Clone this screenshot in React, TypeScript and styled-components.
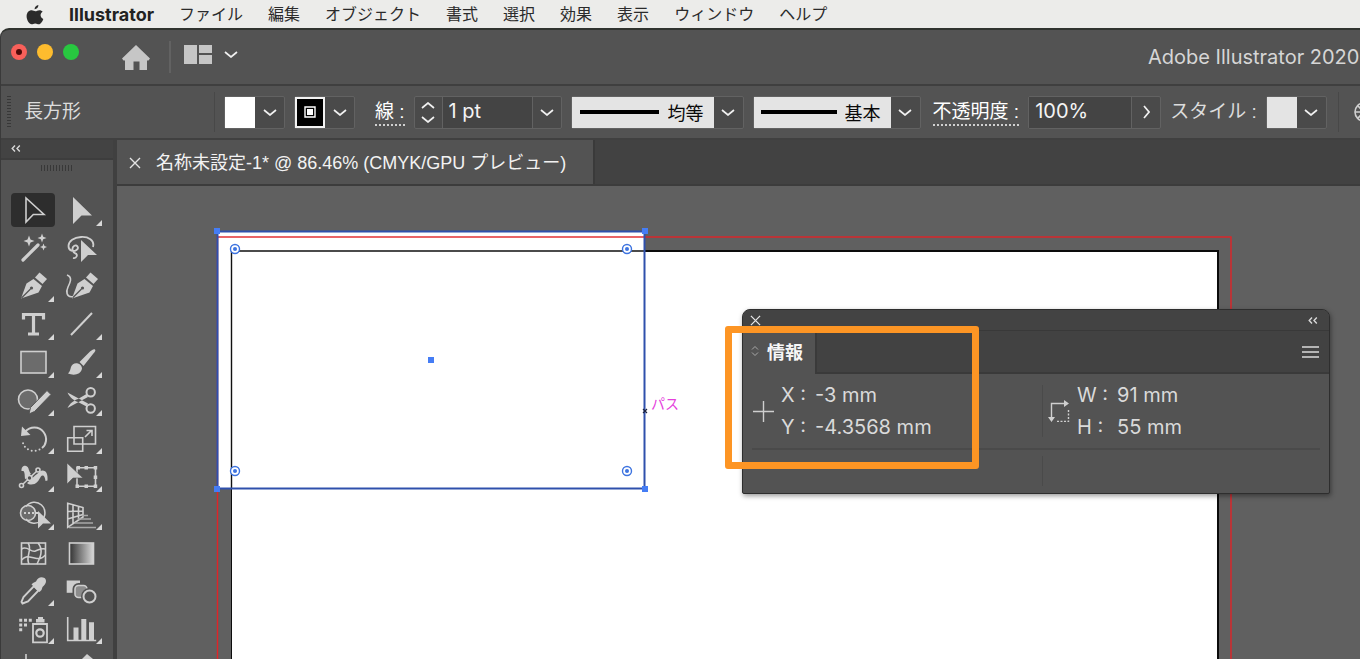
import React from "react";
import styled, { createGlobalStyle } from "styled-components";

const ui = `"Liberation Sans", "Noto Sans CJK JP", sans-serif`;
const wide = `Inter, "Noto Sans CJK JP", sans-serif`;

const GlobalStyle = createGlobalStyle`
  * { box-sizing: border-box; }
  body { margin: 0; background: #ececea; font-family: ${ui}; color: #e8e8e8; }
  button, input, select { font: inherit; color: inherit; margin: 0; padding: 0; border: 0; border-radius: 0; background: none; }
  svg { display: block; flex: none; }
`;

const Screen = styled.div`
  display: flex;
  flex-direction: column;
  height: 100vh;
  overflow: hidden;
`;

/* macOS menu bar */
const MenuBar = styled.nav`
  display: flex;
  align-items: center;
  flex: none;
  gap: 25px;
  height: 28px;
  padding: 1px 0 0 26px;
  background: #ececea;
  color: #2b2b2b;
  font-size: 16px;
  line-height: 24px;
`;
const MenuItem = styled.button<{ $app?: boolean }>`
  flex: none;
  white-space: nowrap;
  font-family: ${(p) => (p.$app ? wide : ui)};
  font-size: ${(p) => (p.$app ? 18 : 16)}px;
  font-weight: ${(p) => (p.$app ? 700 : 400)};
  color: ${(p) => (p.$app ? "#222" : "#2b2b2b")};
`;

/* Application window */
const AppWindow = styled.div`
  display: flex;
  flex-direction: column;
  flex: 1;
  min-height: 0;
  overflow: hidden;
  background: #535353;
  border-top: 2px solid #30332f;
  border-left: 1px solid #3a3a3a;
  border-top-left-radius: 9px;
`;
const TitleBar = styled.header`
  display: flex;
  align-items: center;
  flex: none;
  height: 56px;
  padding-left: 10px;
  border-bottom: 2px solid #3f3f3f;
`;
const Lights = styled.div`
  display: flex;
  gap: 10px;
  padding-bottom: 10px;
`;
const Light = styled.button<{ $color: string }>`
  display: grid;
  place-items: center;
  width: 16px;
  height: 16px;
  border-radius: 50%;
  background: ${(p) => p.$color};
`;
const LightDot = styled.span`
  width: 6px;
  height: 6px;
  border-radius: 50%;
  background: #4d0a08;
`;
const IconButton = styled.button`
  display: grid;
  place-items: center;
  flex: none;
`;
const TitleIcons = styled.div`
  display: flex;
  align-items: center;
  gap: 13px;
  margin-left: 43px;
`;
const WorkspaceSwitch = styled.div`
  display: flex;
  align-items: center;
  gap: 12px;
  padding-bottom: 5px;
`;
const TitleRule = styled.span`
  width: 2px;
  height: 32px;
  margin-left: 6px;
  background: #626262;
`;
const AppTitle = styled.h1`
  flex: none;
  width: 212px;
  margin: 0 0 0 auto;
  overflow: hidden;
  white-space: nowrap;
  font-family: ${wide};
  font-size: 20px;
  font-weight: 400;
  line-height: 28px;
  color: #d6d6d6;
`;

/* Control bar */
const ControlBar = styled.div`
  display: flex;
  align-items: center;
  flex: none;
  height: 54px;
  padding-left: 6px;
  border-bottom: 2px solid #404040;
  overflow: hidden;
`;
const Grip = styled.span<{ $horizontal?: boolean }>`
  flex: none;
  width: ${(p) => (p.$horizontal ? "32px" : "4px")};
  height: ${(p) => (p.$horizontal ? "6px" : "32px")};
  background: repeating-linear-gradient(
    ${(p) => (p.$horizontal ? "to right" : "to bottom")},
    #383838 0 1px,
    #535353 1px 3px
  );
`;
const ObjectName = styled.span`
  flex: none;
  width: 190px;
  margin-left: 13px;
  font-size: 19px;
  line-height: 28px;
  color: #dcdcdc;
`;
const BarRule = styled.span<{ $gap?: number }>`
  flex: none;
  width: 1px;
  height: 40px;
  margin-left: ${(p) => p.$gap ?? 0}px;
  background: #484848;
`;
const RecolorButton = styled(IconButton)`
  margin-left: 15px;
`;
const Field = styled.div`
  display: flex;
  flex: none;
  height: 33px;
  margin-left: 9px;
  border: 1px solid #626262;
  border-radius: 2px;
  background: #4a4a4a;
`;
const Swatch = styled.button<{ $fill: string; $framed?: boolean }>`
  display: grid;
  place-items: center;
  width: 30px;
  height: 31px;
  background: ${(p) => p.$fill};
  border: ${(p) => (p.$framed ? "2px solid #f2f2f2" : "0")};
`;
const Drop = styled.button<{ $divided?: boolean }>`
  display: grid;
  place-items: center;
  width: 29px;
  height: 31px;
  border-left: ${(p) => (p.$divided ? "1px solid #626262" : "0")};
`;
const FieldLabel = styled.label<{ $dotted?: boolean; $gap: number }>`
  flex: none;
  margin-left: ${(p) => p.$gap}px;
  padding-top: 2px;
  font-size: 19px;
  line-height: 24px;
  white-space: pre;
  color: ${(p) => (p.$dotted ? "#fff" : "#dcdcdc")};
  border-bottom: ${(p) => (p.$dotted ? "2px dotted #d0d0d0" : "2px solid transparent")};
`;
const Stepper = styled.div`
  display: grid;
  align-content: center;
  gap: 7px;
  width: 28px;
  border-right: 1px solid #626262;
`;
const ValueInput = styled.input<{ $width: number }>`
  width: ${(p) => p.$width}px;
  padding: 0 0 3px 6px;
  background: #444;
  color: #f4f4f4;
  font-family: ${wide};
  font-size: 20px;
  outline: 0;
`;
const StrokePreview = styled.span<{ $width: number }>`
  display: grid;
  place-items: center;
  width: ${(p) => p.$width}px;
  background: #e4e4e4;
`;
const StrokeSelect = styled.select<{ $width: number }>`
  appearance: none;
  width: ${(p) => p.$width}px;
  padding-top: 3px;
  background: #e4e4e4;
  color: #0a0a0a;
  font-size: 18px;
  outline: 0;
`;

/* Work area */
const WorkArea = styled.div`
  display: flex;
  flex: 1;
  min-height: 0;
`;
const ToolsPanel = styled.aside`
  flex: none;
  width: 116px;
  overflow: hidden;
  border-right: 4px solid #404040;
`;
const ToolsHead = styled.div`
  height: 20px;
  padding: 4px 0 0 10px;
  background: #434343;
  border-bottom: 2px solid #3d3d3d;
`;
const GripRow = styled.div`
  display: flex;
  justify-content: center;
  height: 33px;
  padding-top: 5px;
`;
const ToolGrid = styled.div`
  display: grid;
  grid-template-columns: 44px 44px;
  gap: 4px;
  padding-left: 10px;
`;
const ToolButton = styled.button<{ $selected?: boolean }>`
  width: 44px;
  height: 34px;
  border-radius: 4px;
  background: ${(p) => (p.$selected ? "#2d2d2d" : "none")};
  color: #cfcfcf;
`;
const DocumentArea = styled.main`
  display: flex;
  flex-direction: column;
  flex: 1;
  min-width: 0;
`;
const TabStrip = styled.div`
  display: flex;
  flex: none;
  height: 46px;
  background: #424242;
  border-bottom: 2px solid #3c3c3c;
`;
const DocTab = styled.div`
  display: flex;
  align-items: center;
  gap: 15px;
  width: 478px;
  padding: 2px 0 0 12px;
  background: #535353;
  border-right: 2px solid #3a3a3a;
  font-size: 18px;
  line-height: 26px;
  white-space: nowrap;
  color: #f2f2f2;
`;
const Canvas = styled.section`
  position: relative;
  flex: 1;
  min-height: 0;
  overflow: hidden;
  background: #606060;
`;
const Artwork = styled.svg`
  width: 100%;
  height: 100%;
`;

/* Floating info panel */
const InfoPanel = styled.section`
  position: absolute;
  left: 625px;
  top: 123px;
  width: 588px;
  background: #535353;
  border: 1px solid #2e2e2e;
  border-radius: 8px 8px 2px 2px;
  box-shadow: 1px 2px 5px rgba(0, 0, 0, 0.4);
  overflow: hidden;
`;
const PanelHead = styled.div`
  display: flex;
  align-items: center;
  justify-content: space-between;
  height: 21px;
  padding: 0 11px 0 7px;
  background: #434343;
  border-bottom: 1px solid #393939;
`;
const PanelTabs = styled.div`
  display: flex;
  justify-content: space-between;
  height: 43px;
  background: linear-gradient(#424242 41px, #3a3a3a 41px);
`;
const PanelTab = styled.button`
  display: flex;
  align-items: center;
  gap: 8px;
  width: 74px;
  padding: 0 0 4px 8px;
  background: #535353;
  border-right: 2px solid #3a3a3a;
  font-size: 18px;
  font-weight: 700;
  white-space: nowrap;
  color: #f6f6f6;
`;
const PanelMenu = styled(IconButton)`
  padding: 0 10px 2px 0;
`;
const InfoGrid = styled.div`
  display: grid;
  grid-template-columns: 290px 1fr;
  margin: 0 9px;
`;
const InfoCell = styled.div<{ $short?: boolean; $second?: boolean }>`
  display: flex;
  align-items: center;
  gap: 7px;
  height: ${(p) => (p.$short ? 43 : 76)}px;
  border-bottom: ${(p) => (p.$short ? "0" : "2px solid #4a4a4a")};
  background: ${(p) =>
    p.$second
      ? "linear-gradient(#4a4a4a, #4a4a4a) 0 50% / 1px 70% no-repeat"
      : "none"};
  padding-left: ${(p) => (p.$second ? 6 : 1)}px;
`;
const Readings = styled.dl`
  display: grid;
  grid-template-columns: auto 1fr;
  column-gap: 9px;
  margin: 0;
  font-family: ${wide};
  font-size: 20px;
  font-weight: 400;
  line-height: 32px;
  color: #dadada;
  white-space: pre;
`;
const Term = styled.dt``;
const Value = styled.dd`
  margin: 0;
`;
const Highlight = styled.div`
  position: absolute;
  left: 608px;
  top: 140px;
  width: 254px;
  height: 143px;
  border: 7px solid #fd9524;
  border-radius: 3px;
`;

const Chevron = ({ dir = "down", color = "#f0f0f0" }: { dir?: "down" | "up" | "right"; color?: string }) => {
  const d = { down: "M1 1l6 5 6-5", up: "M1 6l6-5 6 5", right: "M1 1l5 6-5 6" }[dir];
  const side = dir === "right";
  return (
    <svg width={side ? 7 : 14} height={side ? 14 : 7} fill="none" stroke={color} strokeWidth="1.7">
      <path d={d} />
    </svg>
  );
};
const Collapse = () => (
  <svg width="10" height="9" fill="none" stroke="#d8d8d8" strokeWidth="1.4">
    <path d="M4 1.5L1.2 4.5L4 7.5M8.8 1.5L6 4.5L8.8 7.5" />
  </svg>
);
const Cross = ({ size }: { size: number }) => (
  <svg width={size} height={size} viewBox="0 0 12 12" fill="none" stroke="#e4e4e4" strokeWidth="1.4">
    <path d="M1 1l10 10M11 1L1 11" />
  </svg>
);

type Tool = { name: string; flyout?: boolean; art: React.ReactNode };
const line = { fill: "none", stroke: "currentColor", strokeWidth: 1.6 };

const Nib = () => (
  <>
    <path d="M24 8.500L28.500 3.500 36 10l-4.500 5z" fill="currentColor" />
    <path d="M22.500 10L31 17l-3.500 6.500L10 29.500 15.500 14.500z" fill="currentColor" />
    <path d="M10.500 29l9-9" stroke="#535353" strokeWidth="1.200" />
    <circle cx="20.500" cy="19" r="1.600" fill="#535353" />
  </>
);

const tools: Tool[] = [
  { name: "選択", art: <path d="M15 5v24l7.300-7.500H33z" {...line} /> },
  { name: "ダイレクト選択", flyout: true, art: <path d="M14 4v27l8.500-8.500H33z" fill="currentColor" /> },
  {
    name: "自動選択",
    art: (
      <>
        <path d="M12 29l15-15" stroke="currentColor" strokeWidth="3.200" strokeLinecap="round" />
        <path
          d="M18 4.500l1.500 4L23.500 10l-4 1.500-1.500 4-1.500-4-4-1.500 4-1.500zM31 2.500l1.200 3.300L35.500 7l-3.300 1.200L31 11.500l-1.200-3.300L26.500 7l3.300-1.200zM32.500 12.500l1 2.500 2.500 1-2.500 1-1 2.500-1-2.500-2.500-1 2.500-1z"
          fill="currentColor"
        />
      </>
    ),
  },
  {
    name: "なげなわ",
    art: (
      <>
        <path d="M34 16C36 9 29 5.500 22 6S9.500 10 9.500 15s5 6 8 4 .5-6-2.500-4-1 7 1.500 7.500S18 28 14 27" {...line} strokeWidth={1.800} />
        <path d="M22 9v22l7-7h9z" fill="currentColor" />
      </>
    ),
  },
  { name: "ペン", flyout: true, art: <Nib /> },
  {
    name: "曲線",
    art: (
      <>
        <g transform="translate(3 0)">
          <Nib />
        </g>
        <path d="M8 6c6 2 3 8 1 12s-2 11 5 9.500" {...line} />
      </>
    ),
  },
  { name: "文字", flyout: true, art: <path d="M12.500 12.500V7.500h20v5M22.500 7.500V27M17 27h11" {...line} strokeWidth={3.200} /> },
  { name: "直線", flyout: true, art: <path d="M12 28L33 6" {...line} strokeWidth={2} /> },
  { name: "長方形", flyout: true, art: <rect x="10" y="6.500" width="25" height="21.500" {...line} fill="#6c6c6c" /> },
  {
    name: "ブラシ",
    flyout: true,
    art: (
      <path
        d="M36 4.500c-1-1-3 .2-5 2L20.500 17l4 4L34 9c2-2.500 3-3.500 2-4.500zM19 18.500c-3-1-6 .5-7 3.500-.7 2.500-1 4.500-3 6.500 6 2.500 13 1 14-5 0-2-1.500-4.200-4-5z"
        fill="currentColor"
      />
    ),
  },
  {
    name: "Shaper",
    flyout: true,
    art: (
      <>
        <circle cx="17" cy="16.500" r="9.500" {...line} fill="#6c6c6c" />
        <path d="M18 31l1.500-6.500L36 7.500l4 4-16.500 17z" fill="currentColor" stroke="#535353" />
      </>
    ),
  },
  {
    name: "はさみ",
    flyout: true,
    art: (
      <>
        <circle cx="31.700" cy="9.300" r="4.200" {...line} strokeWidth={2} />
        <circle cx="31.700" cy="25.500" r="4.200" {...line} strokeWidth={2} />
        <path d="M8.500 9.500L29 20.500l-1.500 3L19 19c-4-1.500-8-4-10.500-9.500zM8.500 25L29 14l-1.500-3L19 16c-4 1.500-8 4-10.500 9z" fill="currentColor" />
      </>
    ),
  },
  {
    name: "回転",
    flyout: true,
    art: (
      <>
        <path d="M14 11C19 5 28 5 32.500 11s2.500 13-1.500 16" {...line} strokeWidth={2} />
        <path d="M11 5.500L10 15l9.500-1z" fill="currentColor" />
        <path d="M28.500 28.500C22 32 13 29 11.500 20" {...line} strokeWidth={2} strokeDasharray="0 4" strokeLinecap="round" />
      </>
    ),
  },
  {
    name: "拡大・縮小",
    flyout: true,
    art: (
      <>
        <path d="M15 5.500h21.500V23H15zM8.700 16.700h15v13.600h-15z" {...line} />
        <path d="M26 16l6-6M27.500 9.500H33V15" {...line} />
      </>
    ),
  },
  {
    name: "線幅",
    flyout: true,
    art: (
      <>
        <path
          d="M10.500 12C10 6 16 5 17.500 9.500 18.500 13 20 17 24 16c3-.8 4-4.500 7.500-4.500 4 0 5.500 4 5 10l-2 .5c-.5-3.500-1.200-5.500-3-5.500-2.500 0-3 6.500-8 8.500-5 1.500-9-.5-9.500-5-.5-3.500 0-6.500-1.500-8z"
          fill="currentColor"
        />
        <path d="M11 26L27 11" stroke="#535353" strokeWidth="4" />
        <path d="M11 26L27 11" {...line} />
        <circle cx="10.500" cy="26.500" r="2" {...line} fill="#535353" />
        <circle cx="27" cy="11" r="2" {...line} fill="#535353" />
        <circle cx="18.500" cy="19" r="2.500" {...line} fill="#535353" />
      </>
    ),
  },
  {
    name: "自由変形",
    flyout: true,
    art: (
      <>
        <path d="M18 8.700h18.500v18.600H18z" {...line} />
        <path d="M16.500 25.500h3.500v3.500h-3.500zM25.500 25.500h3.500v3.500h-3.500zM34.700 25.500h3.500v3.500h-3.500zM34.700 16.500h3.500V20h-3.500zM34.700 7h3.500v3.500h-3.500zM25.500 7h3.500v3.500h-3.500zM17.500 7H21v3.500h-3.500z" fill="currentColor" />
        <path d="M8 4v21l6-6h10z" fill="currentColor" stroke="#535353" strokeWidth=".6" />
      </>
    ),
  },
  {
    name: "シェイプ形成",
    flyout: true,
    art: (
      <>
        <circle cx="17" cy="16" r="7.500" {...line} fill="#6c6c6c" />
        <path d="M15 9.500a10.500 10.500 0 1 1 0 12.500" {...line} />
        <path d="M13 16h15" {...line} strokeWidth={2} strokeDasharray="2 2" />
        <path d="M27 14v17.500l5-5h8z" fill="currentColor" />
      </>
    ),
  },
  {
    name: "遠近グリッド",
    flyout: true,
    art: (
      <>
        <path d="M8.700 6.300v24L24 20V10.500zM14 8v19M19.500 9v14M8.700 14.500L24 14M8.700 22L24 17.500" {...line} />
        <path d="M23 18.500h6M19 22h13M15.500 26H34M10 30.500h27" {...line} stroke="#a8a8a8" strokeWidth={1.400} />
      </>
    ),
  },
  {
    name: "メッシュ",
    art: (
      <>
        <rect x="10.500" y="8" width="24" height="21" {...line} />
        <path d="M17 8c5 7-3 13 1 21M27 8c6 7 2 15-1 21M10.500 14c6-4 9 4 14 2s6-3 10-2M10.500 25c5-5 8-3 13-2s7 1 11-3" {...line} />
      </>
    ),
  },
  {
    name: "グラデーション",
    art: (
      <>
        <defs>
          <linearGradient id="ramp">
            <stop offset="0" stopColor="#333" />
            <stop offset="1" stopColor="#d8d8d8" />
          </linearGradient>
        </defs>
        <rect x="10.500" y="8" width="24" height="21" {...line} fill="url(#ramp)" />
      </>
    ),
  },
  {
    name: "スポイト",
    flyout: true,
    art: (
      <>
        <path d="M23 13l4.500 4.500L17 28.500l-5.500 2L10.500 29l2-5z" {...line} strokeWidth={1.900} />
        <path d="M22 10l3-1.500c2-4 5-5 8.500-3.500 2.500 2 2 6-2 9L30.500 17l-2 2-8-7.500z" fill="currentColor" />
      </>
    ),
  },
  {
    name: "ブレンド",
    art: (
      <>
        <path d="M7.700 7.500H21v12.300H7.700z" fill="currentColor" />
        <rect x="15.500" y="12" width="13" height="13" rx="4" {...line} stroke="#535353" strokeWidth={4} />
        <rect x="16" y="12.500" width="12" height="12" rx="3.500" {...line} fill="#8c8c8c" />
        <circle cx="30.500" cy="23.500" r="6" {...line} fill="#535353" stroke="#535353" strokeWidth={5} />
        <circle cx="30.500" cy="23.500" r="6" {...line} strokeWidth={2} />
      </>
    ),
  },
  {
    name: "シンボルスプレー",
    flyout: true,
    art: (
      <>
        <path d="M22 13h14v18.300H22z" {...line} strokeWidth={1.800} />
        <path d="M25 10.500V8h2V6h5v2h1.500v3.500H25zM8.200 7.800h3v3h-3zM13 7.800h3v3h-3zM17.800 7.800h3v3h-3zM8.200 12.500h3v3h-3zM13 12.500h3v3h-3zM8.200 17.200h3v3h-3z" fill="currentColor" />
        <circle cx="29" cy="22" r="3.700" {...line} strokeWidth={2.200} />
      </>
    ),
  },
  {
    name: "棒グラフ",
    flyout: true,
    art: (
      <>
        <path d="M8.700 6v23.500h28.500" {...line} />
        <path d="M14.500 16.500h5V29h-5zM22.300 8h5v21h-5zM30 11.300h5V29h-5z" fill="currentColor" />
      </>
    ),
  },
  { name: "アートボード", art: <path d="M15 5v25M10 11h22v19" {...line} /> },
  { name: "スライス", art: <path d="M23 10l5-5 6 5-14 18-8 3z" fill="currentColor" /> },
];

const ToolIcon = ({ tool }: { tool: Tool }) => (
  <svg width="44" height="34" viewBox="0 0 44 34">
    {tool.art}
    {tool.flyout && <path d="M43 27v6h-6z" fill="#d8d8d8" />}
  </svg>
);

const corners = [
  [118, 63],
  [510, 63],
  [118, 285],
  [510, 285],
];
const anchors = [
  [100, 45],
  [528, 45],
  [100, 303],
  [528, 303],
  [314, 174],
];

export default function App() {
  return (
    <Screen>
      <GlobalStyle />
      <MenuBar>
        <MenuItem aria-label="Apple">
          <svg width="18" height="20" viewBox="0 0 18 20" fill="#2b2b2b">
            <path d="M12.400 0c.2 2.300-1.800 4.300-3.800 4.200C8.400 2.200 10.300.2 12.400 0zM16.600 6.700c-3 1.800-2.500 5.900.7 7.200-.8 2.500-2.700 5.300-4.400 5.400-1.500 0-1.900-.9-3.700-.9s-2.300.9-3.600.9C3.300 19.300.6 15 .6 11.300c0-4 2.600-6 5-6 1.600 0 2.700 1 3.800 1 1 0 2.300-1.100 4.200-1.100 1 0 2.300.5 3 1.500z" />
          </svg>
        </MenuItem>
        <MenuItem $app>Illustrator</MenuItem>
        {["ファイル", "編集", "オブジェクト", "書式", "選択", "効果", "表示", "ウィンドウ", "ヘルプ"].map((m) => (
          <MenuItem key={m}>{m}</MenuItem>
        ))}
      </MenuBar>
      <AppWindow>
        <TitleBar>
          <Lights>
            <Light $color="#f9605a" aria-label="閉じる">
              <LightDot />
            </Light>
            <Light $color="#fdbc2e" aria-label="しまう" />
            <Light $color="#28c840" aria-label="拡大" />
          </Lights>
          <TitleIcons>
            <IconButton aria-label="ホーム">
              <svg width="28" height="25" viewBox="0 0 28 25" fill="#c6c6c6">
                <path d="M14 0l14 13.500-1.500 2H25V25h-7.500v-8.500h-6V25H3v-9.500H1.500L0 13.500z" />
              </svg>
            </IconButton>
            <TitleRule />
            <WorkspaceSwitch>
              <IconButton aria-label="ワークスペース">
                <svg width="28" height="19" viewBox="0 0 28 19" fill="#c6c6c6">
                  <path d="M0 0h13v19H0zM15 0h13v8H15zM15 10h13v9H15z" />
                </svg>
              </IconButton>
              <IconButton aria-label="ワークスペースの切り替え">
                <Chevron />
              </IconButton>
            </WorkspaceSwitch>
          </TitleIcons>
          <AppTitle>Adobe Illustrator 2020</AppTitle>
        </TitleBar>
        <ControlBar>
          <Grip />
          <ObjectName>長方形</ObjectName>
          <BarRule />
          <Field>
            <Swatch $fill="#fff" aria-label="塗り" />
            <Drop aria-label="塗りの一覧">
              <Chevron />
            </Drop>
          </Field>
          <Field>
            <Swatch $fill="#000" $framed aria-label="線のカラー">
              <svg width="12" height="12">
                <path d="M1 1h10v10H1z" fill="none" stroke="#fff" strokeWidth="1.400" />
                <path d="M3 3h6v6H3z" fill="#fff" />
              </svg>
            </Swatch>
            <Drop aria-label="線のカラーの一覧">
              <Chevron />
            </Drop>
          </Field>
          <FieldLabel $dotted $gap={20} htmlFor="weight">
            線 :
          </FieldLabel>
          <Field>
            <Stepper>
              <IconButton aria-label="増やす">
                <Chevron dir="up" />
              </IconButton>
              <IconButton aria-label="減らす">
                <Chevron />
              </IconButton>
            </Stepper>
            <ValueInput id="weight" $width={89} defaultValue="1 pt" />
            <Drop $divided aria-label="線幅の一覧">
              <Chevron />
            </Drop>
          </Field>
          <Field>
            <StrokePreview $width={96}>
              <svg width="79" height="4">
                <path d="M0 2h79" stroke="#000" strokeWidth="4" />
              </svg>
            </StrokePreview>
            <StrokeSelect $width={46} aria-label="可変線幅プロファイル">
              <option>均等</option>
            </StrokeSelect>
            <Drop aria-label="プロファイルの一覧">
              <Chevron />
            </Drop>
          </Field>
          <Field>
            <StrokePreview $width={91}>
              <svg width="76" height="4">
                <path d="M0 2h76" stroke="#000" strokeWidth="4" />
              </svg>
            </StrokePreview>
            <StrokeSelect $width={46} aria-label="ブラシ定義">
              <option>基本</option>
            </StrokeSelect>
            <Drop aria-label="ブラシの一覧">
              <Chevron />
            </Drop>
          </Field>
          <FieldLabel $dotted $gap={12} htmlFor="opacity">
            不透明度 :
          </FieldLabel>
          <Field>
            <ValueInput id="opacity" $width={102} defaultValue="100%" />
            <Drop $divided aria-label="不透明度の一覧">
              <Chevron dir="right" />
            </Drop>
          </Field>
          <FieldLabel $gap={9} htmlFor="style">
            スタイル :
          </FieldLabel>
          <Field>
            <Swatch id="style" $fill="#e4e4e4" />
            <Drop aria-label="スタイルの一覧">
              <Chevron />
            </Drop>
          </Field>
          <BarRule $gap={11} />
          <RecolorButton aria-label="オブジェクトを再配色">
            <svg width="20" height="20" fill="none" stroke="#d0d0d0" strokeWidth="1.600">
              <circle cx="10" cy="10" r="9" />
              <path d="M10 1v18M1 10h18M4 4l12 12M16 4L4 16" />
            </svg>
          </RecolorButton>
        </ControlBar>
        <WorkArea>
          <ToolsPanel>
            <ToolsHead>
              <IconButton aria-label="パネルを折りたたむ">
                <Collapse />
              </IconButton>
            </ToolsHead>
            <GripRow>
              <Grip $horizontal />
            </GripRow>
            <ToolGrid>
              {tools.map((t, i) => (
                <ToolButton key={t.name} $selected={i === 0} aria-label={t.name}>
                  <ToolIcon tool={t} />
                </ToolButton>
              ))}
            </ToolGrid>
          </ToolsPanel>
          <DocumentArea>
            <TabStrip>
              <DocTab>
                <IconButton aria-label="ドキュメントを閉じる">
                  <Cross size={12} />
                </IconButton>
                <span>名称未設定-1* @ 86.46% (CMYK/GPU プレビュー)</span>
              </DocTab>
            </TabStrip>
            <Canvas>
              <Artwork>
                <rect x="114" y="64" width="988" height="900" fill="#0c0c0c" />
                <rect x="115" y="66" width="985" height="900" fill="#fff" />
                <rect x="100" y="45" width="428" height="258" fill="#fff" />
                <path d="M114.500 303V65H528" fill="none" stroke="#111" strokeWidth="1.400" />
                <rect x="100.500" y="51" width="1013.500" height="950" fill="none" stroke="#e02428" strokeWidth="1.400" />
                <rect x="100.500" y="45.500" width="427" height="257" fill="none" stroke="#2f50ac" strokeWidth="2" />
                {anchors.map(([x, y]) => (
                  <rect key={`${x}-${y}`} x={x - 3} y={y - 3} width="6" height="6" fill="#457df5" />
                ))}
                {corners.map(([x, y]) => (
                  <g key={`${x}-${y}`}>
                    <circle cx={x} cy={y} r="4.500" fill="#fff" stroke="#3e74e0" strokeWidth="1.400" />
                    <circle cx={x} cy={y} r="2" fill="#3e74e0" />
                  </g>
                ))}
                <path d="M526 223l4 4M530 223l-4 4" stroke="#1c2340" strokeWidth="1.200" />
                <text x="534" y="223" fontSize="14" fill="#e53fdc">
                  パス
                </text>
              </Artwork>
              <InfoPanel>
                <PanelHead>
                  <IconButton aria-label="パネルを閉じる">
                    <Cross size={11} />
                  </IconButton>
                  <IconButton aria-label="アイコン化">
                    <Collapse />
                  </IconButton>
                </PanelHead>
                <PanelTabs>
                  <PanelTab>
                    <svg width="8" height="12" fill="none" stroke="#a8a8a8">
                      <path d="M1 4.500l3-3 3 3M1 7.500l3 3 3-3" />
                    </svg>
                    情報
                  </PanelTab>
                  <PanelMenu aria-label="パネルメニュー">
                    <svg width="17" height="12" stroke="#b4b4b4" strokeWidth="2">
                      <path d="M0 1h17M0 6h17M0 11h17" />
                    </svg>
                  </PanelMenu>
                </PanelTabs>
                <InfoGrid>
                  <InfoCell>
                    <svg width="21" height="21" stroke="#cfcfcf" strokeWidth="1.400">
                      <path d="M0 10.500h21M10.500 0v21" />
                    </svg>
                    <Readings>
                      <Term>X :</Term>
                      <Value>-3 mm</Value>
                      <Term>Y :</Term>
                      <Value>-4.3568 mm</Value>
                    </Readings>
                  </InfoCell>
                  <InfoCell $second>
                    <svg width="22" height="22" fill="none" stroke="#cfcfcf" strokeWidth="1.400">
                      <path d="M3.500 17V3.500H17" />
                      <path d="M16 0l5 3.500L16 7zM0 17h7l-3.500 5z" fill="#cfcfcf" stroke="none" />
                      <path d="M20.500 10v11.500H9" strokeDasharray="2 1.500" />
                    </svg>
                    <Readings>
                      <Term>W :</Term>
                      <Value>91 mm</Value>
                      <Term>H :</Term>
                      <Value>55 mm</Value>
                    </Readings>
                  </InfoCell>
                  <InfoCell $short />
                  <InfoCell $short $second />
                </InfoGrid>
              </InfoPanel>
              <Highlight />
            </Canvas>
          </DocumentArea>
        </WorkArea>
      </AppWindow>
    </Screen>
  );
}
